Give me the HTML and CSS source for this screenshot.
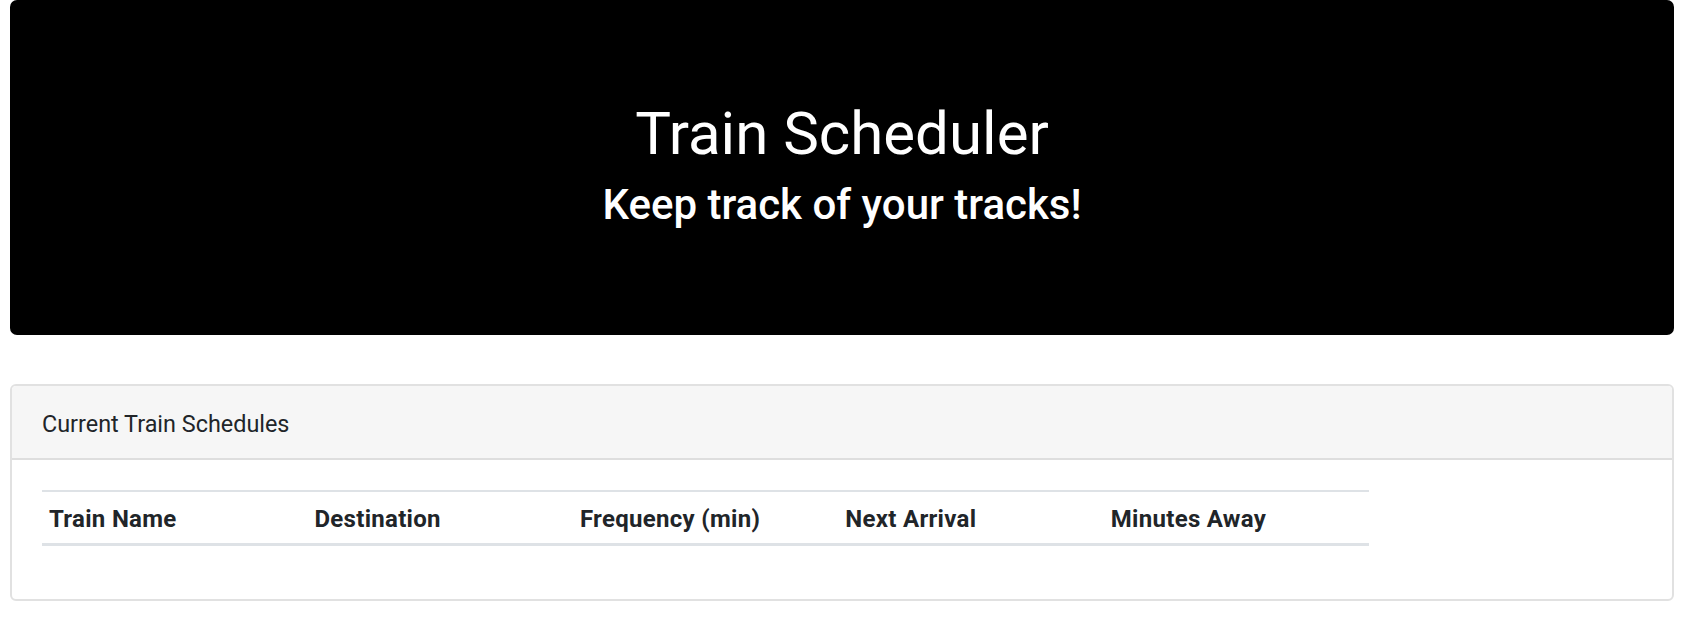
FILE: index.html
```html
<!DOCTYPE html>
<html lang="en">
<head>
<meta charset="utf-8">
<title>Train Scheduler</title>
<link rel="stylesheet" href="styles.css">
</head>
<body>
<div class="page">
  <header class="jumbotron">
    <h1 class="title">Train Scheduler</h1>
    <h3 class="subtitle">Keep track of your tracks!</h3>
  </header>

  <section class="card">
    <div class="card-header">Current Train Schedules</div>
    <div class="card-body">
      <div class="table-col">
        <table class="schedule">
          <thead>
            <tr>
              <th>Train Name</th>
              <th>Destination</th>
              <th>Frequency (min)</th>
              <th>Next Arrival</th>
              <th>Minutes Away</th>
            </tr>
          </thead>
          <tbody></tbody>
        </table>
      </div>
    </div>
  </section>
</div>
</body>
</html>
```
FILE: styles.css
```css
* { box-sizing: border-box; }

html, body {
  margin: 0;
  padding: 0;
  background: #fff;
}

body {
  font-family: Roboto, "Liberation Sans", sans-serif;
  color: #212529;
  font-size: 24px;
  line-height: 1.5;
}

.page {
  padding: 0 17px 0 10px;
}

.jumbotron {
  background: #000;
  color: #fff;
  text-align: center;
  padding: 98px 48px 94px;
  border-radius: 7px;
  margin-bottom: 49px;
}

.title {
  margin: 0 0 10px;
  font-size: 60px;
  font-weight: 400;
  line-height: 72px;
}

.subtitle {
  margin: 0 0 11px;
  font-size: 42px;
  font-weight: 500;
  line-height: 50px;
}

.card {
  border: 2px solid #e1e1e1;
  border-radius: 6px;
  overflow: hidden;
  background: #fff;
}

.card-header {
  background: #f6f6f6;
  border-bottom: 2px solid #dedede;
  padding: 20px 30px 16px;
  font-size: 23.4px;
  line-height: 36px;
  color: #212529;
}

.card-body {
  padding: 30px 30px 29px;
}

.table-col {
  width: 82.95%;
}

.schedule {
  width: 100%;
  border-collapse: collapse;
  table-layout: fixed;
  margin-bottom: 24px;
}

.schedule th {
  text-align: left;
  font-weight: 700;
  font-size: 24px;
  letter-spacing: 0.3px;
  line-height: 36px;
  padding: 9px 7px 6px;
  border-top: 2px solid #dee2e6;
  border-bottom: 3px solid #dee2e6;
  color: #212529;
}
```
